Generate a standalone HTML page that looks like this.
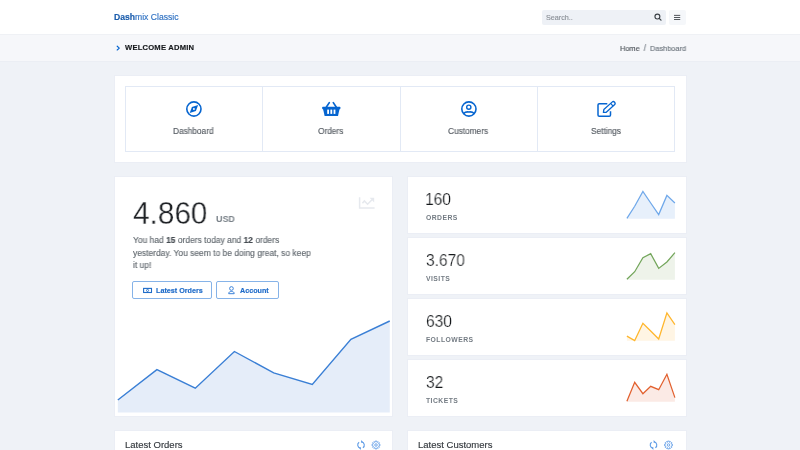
<!DOCTYPE html>
<html><head><meta charset="utf-8">
<style>
*{box-sizing:border-box;margin:0;padding:0}
html,body{width:800px;height:450px;overflow:hidden}
body{background:#eff2f7;font-family:"Liberation Sans",sans-serif;color:#373b3e;position:relative}
.a{position:absolute}
.t{position:absolute;white-space:nowrap;line-height:1;will-change:transform;-webkit-text-stroke-width:0.15px}
.card{position:absolute;background:#fff;box-shadow:0 0 0 1px #ebeef5}
svg{position:absolute;left:0;top:0;overflow:visible}
</style></head><body>

<div class="a" style="left:0;top:0;width:800px;height:34px;background:#fff"></div>
<div class="a" style="left:0;top:34px;width:800px;height:27px;background:#f6f7fa"></div>
<div class="a" style="left:0;top:34px;width:800px;height:1px;background:#eff1f5"></div>
<div class="a" style="left:0;top:61px;width:800px;height:1px;background:#ebeef4"></div>
<div class="a" style="left:542px;top:9.7px;width:124.2px;height:15px;background:#eef1f6;border-radius:2px"></div>
<div class="a" style="left:668.8px;top:9.8px;width:17.1px;height:15px;background:#f5f7fa;border-radius:2px"></div>

<div class="card" style="left:115px;top:75.8px;width:570.5px;height:86px"></div>
<div class="a" style="left:125px;top:86px;width:550px;height:66px;border:1px solid #e2e9f5"></div>
<div class="a" style="left:262px;top:86px;width:1px;height:66px;background:#e2e9f5"></div>
<div class="a" style="left:400px;top:86px;width:1px;height:66px;background:#e2e9f5"></div>
<div class="a" style="left:537px;top:86px;width:1px;height:66px;background:#e2e9f5"></div>

<div class="card" style="left:115px;top:177px;width:277.2px;height:238.8px"></div>
<div class="a" style="left:132.3px;top:281.2px;width:79.9px;height:17.6px;border:1px solid #86b3e8;border-radius:2px"></div>
<div class="a" style="left:216.3px;top:281.2px;width:62.6px;height:17.6px;border:1px solid #86b3e8;border-radius:2px"></div>

<div class="card" style="left:407.5px;top:177px;width:278px;height:55.8px"></div>
<div class="card" style="left:407.5px;top:238px;width:278px;height:55.8px"></div>
<div class="card" style="left:407.5px;top:299px;width:278px;height:55.8px"></div>
<div class="card" style="left:407.5px;top:360px;width:278px;height:55.8px"></div>

<div class="card" style="left:115px;top:430.8px;width:277.2px;height:30px"></div>
<div class="card" style="left:407.5px;top:430.8px;width:278px;height:30px"></div>

<svg width="800" height="450">
<polygon points="117.8,400 156.9,369.6 195.3,388.2 234.4,351.5 273.7,372.8 312.3,384.5 350.9,339.3 389.75,321 389.75,412.5 117.8,412.5" fill="#e5edf9"/>
<polyline points="117.8,400 156.9,369.6 195.3,388.2 234.4,351.5 273.7,372.8 312.3,384.5 350.9,339.3 389.75,321" fill="none" stroke="#3a7fd5" stroke-width="1.4"/>
<polygon points="626.9,218.3 634.7,206.3 642.9,191.4 650.7,203 658.7,214.6 666.9,195.4 674.9,203 674.9,218.7 626.9,218.7" fill="#e7f0fb"/>
<polyline points="626.9,218.3 634.7,206.3 642.9,191.4 650.7,203 658.7,214.6 666.9,195.4 674.9,203" fill="none" stroke="#6fa8ea" stroke-width="1.25"/>
<polygon points="626.9,279.3 634.7,271.7 642.9,257.7 650.7,253.7 658.7,268.4 666.9,262 674.9,252.7 674.9,279.7 626.9,279.7" fill="#eef3ea"/>
<polyline points="626.9,279.3 634.7,271.7 642.9,257.7 650.7,253.7 658.7,268.4 666.9,262 674.9,252.7" fill="none" stroke="#73a65b" stroke-width="1.25"/>
<polygon points="626.9,336.1 634.7,340.6 642.9,323.3 650.7,331 658.7,339 666.9,313 674.9,324.7 674.9,340.7 626.9,340.7" fill="#fff5e4"/>
<polyline points="626.9,336.1 634.7,340.6 642.9,323.3 650.7,331 658.7,339 666.9,313 674.9,324.7" fill="none" stroke="#ffb62c" stroke-width="1.25"/>
<polygon points="626.9,401.3 634.7,382.3 642.9,393.7 650.7,386.3 658.7,389.7 666.9,374.3 674.9,397.6 674.9,401.7 626.9,401.7" fill="#fbeae5"/>
<polyline points="626.9,401.3 634.7,382.3 642.9,393.7 650.7,386.3 658.7,389.7 666.9,374.3 674.9,397.6" fill="none" stroke="#e2602e" stroke-width="1.25"/>
</svg>

<div class="t" id="brand" style="left:114.20px;top:12.62px;font-size:8.6px;color:#2d70c2"><b style="color:#1a5cac">Dash</b>mix Classic</div>
<div class="t" id="search" style="left:546.00px;top:13.81px;font-size:7.2px;color:#8c9198">Search..</div>
<div class="t" id="welcome" style="left:125.20px;top:44.27px;font-size:7.6px;color:#15181b;font-weight:700;letter-spacing:0.22px">WELCOME ADMIN</div>
<div class="t" id="crumb" style="left:620.00px;top:45.01px;font-size:7.9px;color:#6c757d;transform:scaleX(0.935);transform-origin:0 0"><span style="color:#50565c">Home</span><span style="margin:0 4.1px 0 4.5px;color:#6c757d;font-size:8.6px;line-height:0">/</span>Dashboard</div>
<div class="t" id="n1" style="left:173.30px;top:127.32px;font-size:8.6px;color:#565c63;transform:scaleX(0.965);transform-origin:0 0">Dashboard</div>
<div class="t" id="n2" style="left:318.45px;top:127.32px;font-size:8.6px;color:#565c63;transform:scaleX(0.965);transform-origin:0 0">Orders</div>
<div class="t" id="n3" style="left:448.45px;top:127.32px;font-size:8.6px;color:#565c63;transform:scaleX(0.965);transform-origin:0 0">Customers</div>
<div class="t" id="n4" style="left:590.60px;top:127.32px;font-size:8.6px;color:#565c63;transform:scaleX(0.965);transform-origin:0 0">Settings</div>
<div class="t" id="big" style="left:133.30px;top:198.00px;font-size:30.5px;color:#1e2125;transform:scaleX(0.975);transform-origin:0 0;-webkit-text-stroke:0.3px #fff">4.860</div>
<div class="t" id="usd" style="left:215.60px;top:215.06px;font-size:9.2px;color:#7a8289;font-weight:700;transform:scaleX(0.97);transform-origin:0 0;-webkit-text-stroke-width:0">USD</div>
<div class="t" id="p1" style="left:133.20px;top:235.55px;font-size:8.8px;color:#62696f;transform:scaleX(0.96);transform-origin:0 0">You had <b style="color:#454b51">15</b> orders today and <b style="color:#454b51">12</b> orders</div>
<div class="t" id="p2" style="left:133.20px;top:248.55px;font-size:8.8px;color:#62696f;transform:scaleX(0.96);transform-origin:0 0">yesterday. You seem to be doing great, so keep</div>
<div class="t" id="p3" style="left:133.20px;top:261.15px;font-size:8.8px;color:#62696f;transform:scaleX(0.96);transform-origin:0 0">it up!</div>
<div class="t" id="b1" style="left:156.00px;top:287.11px;font-size:7.2px;color:#1d6ac8;font-weight:700">Latest Orders</div>
<div class="t" id="b2" style="left:239.90px;top:287.11px;font-size:7.2px;color:#1d6ac8;font-weight:700">Account</div>
<div class="t" id="s0n" style="left:424.60px;top:190.79px;font-size:16.2px;color:#15181b;transform:scaleX(0.96);transform-origin:0 0;-webkit-text-stroke:0.22px #fff">160</div>
<div class="t" id="s0l" style="left:426.00px;top:215.24px;font-size:6.8px;color:#737b83;font-weight:700;letter-spacing:0.45px;-webkit-text-stroke-width:0">ORDERS</div>
<div class="t" id="s1n" style="left:425.70px;top:252.19px;font-size:16.2px;color:#15181b;transform:scaleX(0.96);transform-origin:0 0;-webkit-text-stroke:0.22px #fff">3.670</div>
<div class="t" id="s1l" style="left:426.00px;top:276.04px;font-size:6.8px;color:#737b83;font-weight:700;letter-spacing:0.45px;-webkit-text-stroke-width:0">VISITS</div>
<div class="t" id="s2n" style="left:425.70px;top:312.89px;font-size:16.2px;color:#15181b;transform:scaleX(0.96);transform-origin:0 0;-webkit-text-stroke:0.22px #fff">630</div>
<div class="t" id="s2l" style="left:426.00px;top:337.14px;font-size:6.8px;color:#737b83;font-weight:700;letter-spacing:0.45px;-webkit-text-stroke-width:0">FOLLOWERS</div>
<div class="t" id="s3n" style="left:425.70px;top:374.19px;font-size:16.2px;color:#15181b;transform:scaleX(0.96);transform-origin:0 0;-webkit-text-stroke:0.22px #fff">32</div>
<div class="t" id="s3l" style="left:426.00px;top:398.14px;font-size:6.8px;color:#737b83;font-weight:700;letter-spacing:0.45px;-webkit-text-stroke-width:0">TICKETS</div>
<div class="t" id="lo" style="left:125.00px;top:440.06px;font-size:9.5px;color:#34393e">Latest Orders</div>
<div class="t" id="lc" style="left:418.10px;top:440.06px;font-size:9.5px;color:#34393e">Latest Customers</div>
<!-- icons -->
<svg width="800" height="450" style="left:0;top:0">
  <polyline points="117.2,46.2 119.3,48.1 117.2,50" fill="none" stroke="#0665d0" stroke-width="1.15" stroke-linecap="round" stroke-linejoin="round"/>
  <circle cx="657.4" cy="16.55" r="2.45" fill="none" stroke="#3a4046" stroke-width="1.15"/>
  <line x1="659.2" y1="18.35" x2="661" y2="20.15" stroke="#3a4046" stroke-width="1.3" stroke-linecap="round"/>
  <rect x="674" y="14.9" width="6.2" height="0.85" fill="#343a40"/>
  <rect x="674" y="17" width="6.2" height="0.85" fill="#343a40"/>
  <rect x="674" y="19.1" width="6.2" height="0.85" fill="#343a40"/>
  <!-- compass -->
  <circle cx="193.9" cy="109" r="7.1" fill="none" stroke="#0665d0" stroke-width="1.6"/>
  <polygon points="198.1,104.9 195.9,111 189.7,113.1 191.9,107" fill="#0665d0"/>
  <circle cx="193.9" cy="109" r="0.95" fill="#fff"/>
  <!-- basket -->
  <line x1="329.3" y1="102.6" x2="326.4" y2="107" stroke="#0665d0" stroke-width="1.7" stroke-linecap="round"/>
  <line x1="333.3" y1="102.6" x2="336.2" y2="107" stroke="#0665d0" stroke-width="1.7" stroke-linecap="round"/>
  <rect x="322.2" y="106.7" width="18.2" height="2.5" rx="0.7" fill="#0665d0"/>
  <polygon points="323,108.8 339.6,108.8 338.1,115.6 338,116 324.6,116 324.5,115.6" fill="#0665d0"/>
  <rect x="327.2" y="109.6" width="1.8" height="4.3" fill="#fff"/>
  <rect x="330.4" y="109.6" width="1.8" height="4.3" fill="#fff"/>
  <rect x="333.6" y="109.6" width="1.8" height="4.3" fill="#fff"/>
  <!-- customers -->
  <circle cx="468.9" cy="109" r="7.1" fill="none" stroke="#0665d0" stroke-width="1.6"/>
  <circle cx="468.8" cy="107.2" r="2.1" fill="none" stroke="#0665d0" stroke-width="1.4"/>
  <path d="M463.6,113.6 Q465.6,111.4 468.9,112 Q472.2,111.4 474.2,113.6" fill="none" stroke="#0665d0" stroke-width="1.6"/>
  <!-- settings -->
  <path d="M607.3,103.7 H599.3 Q598,103.7 598,105 V114.9 Q598,116.2 599.3,116.2 H609.2 Q610.5,116.2 610.5,114.9 V111.3" fill="none" stroke="#0665d0" stroke-width="1.5"/>
  <g transform="translate(603.2,112.6) rotate(-42.2)">
    <path d="M0.3,0 L2.5,-1.8 H13.6 Q15.4,-1.8 15.4,0 Q15.4,1.8 13.6,1.8 H2.5 Z" fill="none" stroke="#0665d0" stroke-width="1.3" stroke-linejoin="round"/>
    <line x1="11.7" y1="-1.8" x2="11.7" y2="1.8" stroke="#0665d0" stroke-width="1.2"/>
  </g>
  <!-- money -->
  <rect x="143.6" y="288.4" width="7.9" height="4.1" fill="none" stroke="#1f6cc8" stroke-width="1.1"/>
  <circle cx="147.55" cy="290.45" r="1.05" fill="none" stroke="#1f6cc8" stroke-width="0.9"/>
  <!-- user -->
  <circle cx="231.45" cy="288.5" r="1.85" fill="none" stroke="#3b82d8" stroke-width="1"/>
  <path d="M228.7,293.7 C228.7,292.1 229.7,291.5 231.45,291.5 C233.2,291.5 234.2,292.1 234.2,293.7 Z" fill="none" stroke="#3b82d8" stroke-width="1" stroke-linejoin="round"/>
  <!-- chart-line trend -->
  <path d="M359.6,197.3 V208 H374.6" fill="none" stroke="#e6e9ee" stroke-width="1.5"/>
  <polyline points="362.4,203.2 364.4,200.9 367.6,204.2 372,199.8" fill="none" stroke="#e6e9ee" stroke-width="1.6"/>
  <polygon points="369.6,197.8 374.2,197.8 374.2,202.4" fill="#e6e9ee"/>
  <!-- refresh -->
<path d="M359.11,442.30 A3.3,3.3 0 0 0 360.43,448.25" fill="none" stroke="#5d9be6" stroke-width="1.1"/><path d="M362.89,447.70 A3.3,3.3 0 0 0 361.57,441.75" fill="none" stroke="#5d9be6" stroke-width="1.1"/><polygon points="361.10,440.10 363.30,442.40 361.10,442.80" fill="#5d9be6"/><polygon points="360.90,449.90 358.70,447.60 360.90,447.20" fill="#5d9be6"/>
<polygon points="375.17,441.09 376.83,441.09 376.97,442.32 377.20,442.42 378.18,441.65 379.35,442.82 378.58,443.80 378.68,444.03 379.91,444.17 379.91,445.83 378.68,445.97 378.58,446.20 379.35,447.18 378.18,448.35 377.20,447.58 376.97,447.68 376.83,448.91 375.17,448.91 375.03,447.68 374.80,447.58 373.82,448.35 372.65,447.18 373.42,446.20 373.32,445.97 372.09,445.83 372.09,444.17 373.32,444.03 373.42,443.80 372.65,442.82 373.82,441.65 374.80,442.42 375.03,442.32" fill="none" stroke="#5d9be6" stroke-width="0.85" stroke-linejoin="round"/><circle cx="376" cy="445" r="1.25" fill="none" stroke="#5d9be6" stroke-width="0.85"/>
<path d="M651.61,442.30 A3.3,3.3 0 0 0 652.93,448.25" fill="none" stroke="#5d9be6" stroke-width="1.1"/><path d="M655.39,447.70 A3.3,3.3 0 0 0 654.07,441.75" fill="none" stroke="#5d9be6" stroke-width="1.1"/><polygon points="653.60,440.10 655.80,442.40 653.60,442.80" fill="#5d9be6"/><polygon points="653.40,449.90 651.20,447.60 653.40,447.20" fill="#5d9be6"/>
<polygon points="667.67,441.09 669.33,441.09 669.47,442.32 669.70,442.42 670.68,441.65 671.85,442.82 671.08,443.80 671.18,444.03 672.41,444.17 672.41,445.83 671.18,445.97 671.08,446.20 671.85,447.18 670.68,448.35 669.70,447.58 669.47,447.68 669.33,448.91 667.67,448.91 667.53,447.68 667.30,447.58 666.32,448.35 665.15,447.18 665.92,446.20 665.82,445.97 664.59,445.83 664.59,444.17 665.82,444.03 665.92,443.80 665.15,442.82 666.32,441.65 667.30,442.42 667.53,442.32" fill="none" stroke="#5d9be6" stroke-width="0.85" stroke-linejoin="round"/><circle cx="668.5" cy="445" r="1.25" fill="none" stroke="#5d9be6" stroke-width="0.85"/>
</svg>

</body></html>
